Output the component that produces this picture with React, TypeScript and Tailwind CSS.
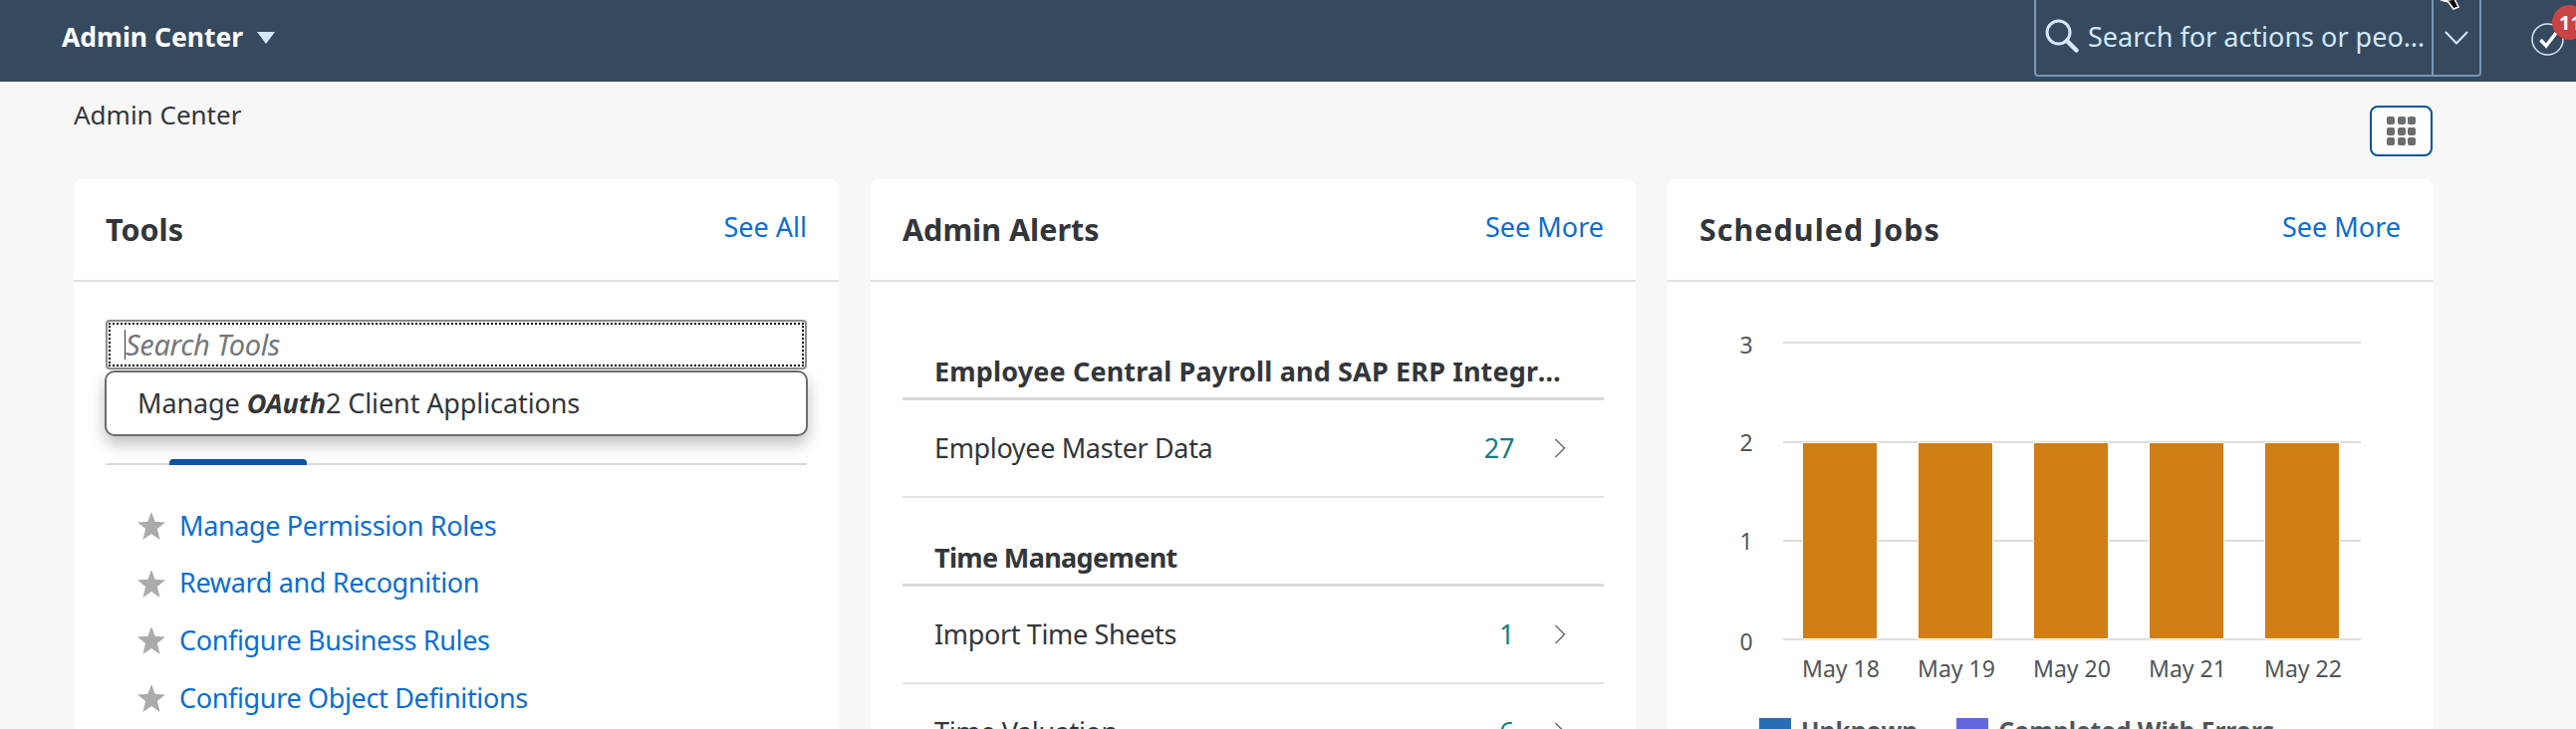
const tools = ['Manage Permission Roles', 'Reward and Recognition', 'Configure Business Rules', 'Configure Object Definitions']

const alertGroups = [
  {
    title: 'Employee Central Payroll and SAP ERP Integration',
    titleClass: 'tracking-[0.15px]',
    rows: [{ label: 'Employee Master Data', count: 27 }],
  },
  {
    title: 'Time Management',
    titleClass: 'tracking-[-0.65px]',
    rows: [
      { label: 'Import Time Sheets', count: 1 },
      { label: 'Time Valuation', count: 6 },
    ],
  },
]

const days = ['May 18', 'May 19', 'May 20', 'May 21', 'May 22']

function Star() {
  return (
    <svg width="28" height="28" viewBox="0 0 28 28" className="shrink-0">
      <polygon points="14,0 17.6,9.8 28,10.4 19.9,17 22.6,28 14,22 5.4,28 8.1,17 0,10.4 10.4,9.8" fill="#ababab" />
    </svg>
  )
}

function CardHeader({ title, link, titleClass = '' }: { title: string; link: string; titleClass?: string }) {
  return (
    <div className="flex h-[103px] justify-between border-b-2 border-[#e1e1e1] px-8 pt-[30px]">
      <h2 className={`text-[30.5px] leading-[40px] font-bold text-[#32363a] ${titleClass}`}>{title}</h2>
      <a className="text-[27px] leading-[36px] text-[#0a6ed1]">{link}</a>
    </div>
  )
}

function ToolsCard() {
  return (
    <section className="h-[552px] rounded-t-lg bg-white">
      <CardHeader title="Tools" link="See All" />
      <div className="px-8 pt-[38px]">
        <div className="h-[50px] rounded-[4px] border-2 border-[#8c8c8c] bg-white p-px">
          <div className="flex h-full items-center border-2 border-dotted border-black pl-[14px]">
            <span className="h-[30px] w-px bg-[#32363a]" />
            <span className="text-[29px] tracking-[-0.35px] text-[#74777a] italic">Search Tools</span>
          </div>
        </div>
        <div className="relative z-10 -mx-px mt-px flex h-[66px] items-center rounded-[10px] border-2 border-[#6a6d70] bg-white pl-[31px] text-[27px] tracking-[-0.1px] text-[#32363a] shadow-[0_8px_16px_rgba(0,0,0,0.25)]">
          Manage&nbsp;<b className="italic">OAuth</b>2 Client Applications
        </div>
        <div className="mt-[23px] h-[6px] border-b-[2px] border-[#d9d9d9]">
          <div className="ml-16 h-[6px] w-[138px] rounded-t-[4px] bg-[#0854a0]" />
        </div>
        <ul className="mt-[32px] pl-8">
          {tools.map((name) => (
            <li key={name} className="flex h-[57.7px] items-center gap-[14px]">
              <Star />
              <a className="text-[27px] tracking-[-0.35px] text-[#0a6ed1]">{name}</a>
            </li>
          ))}
        </ul>
      </div>
    </section>
  )
}

function Chevron() {
  return (
    <svg width="12" height="20" viewBox="0 0 12 20" fill="none" stroke="#6a6d70" strokeWidth="1.5" className="ml-[40px] shrink-0">
      <path d="M1.5 1 L10.5 10 L1.5 19" />
    </svg>
  )
}

function AlertsCard() {
  return (
    <section className="h-[552px] overflow-hidden rounded-t-lg bg-white">
      <CardHeader title="Admin Alerts" link="See More" />
      <div className="px-8 pt-[67px]">
        {alertGroups.map((group) => (
          <div key={group.title} className="mb-[37px]">
            <h3 className={`h-[52px] truncate border-b-[3px] border-[#d9d9d9] pr-[43px] pl-8 text-[27px] leading-[46px] font-bold text-[#32363a] ${group.titleClass}`}>
              {group.title}
            </h3>
            {group.rows.map((row) => (
              <div key={row.label} className="flex h-[98px] items-center border-b-2 border-[#e5e5e5] pr-[38px] pl-8 text-[27px] tracking-[-0.35px]">
                <span className="flex-1 text-[#32363a]">{row.label}</span>
                <span className="text-[#107e7d]">{row.count}</span>
                <Chevron />
              </div>
            ))}
          </div>
        ))}
      </div>
    </section>
  )
}

function JobsChart() {
  const grid = [61, 161, 260, 359]
  const labels = ['3', '2', '1', '0']
  return (
    <svg width="768" height="438" viewBox="0 0 768 438" className="block">
      {grid.map((y, i) => (
        <g key={y}>
          <line x1="116" x2="696" y1={y} y2={y} stroke="#dedede" strokeWidth="2" />
          <text x="79" y={y + (i === 1 || i === 2 ? 9 : 11)} textAnchor="middle" fontSize="23" fill="#515559">
            {labels[i]}
          </text>
        </g>
      ))}
      {days.map((day, i) => (
        <g key={day}>
          <rect x={136 + i * 116} y="162" width="74" height="196" fill="#d17e15" stroke="#ffffff" strokeWidth="2" paintOrder="stroke" />
          <text x={174 + i * 116} y="397" textAnchor="middle" fontSize="23" fill="#515559">
            {day}
          </text>
        </g>
      ))}
    </svg>
  )
}

function JobsCard() {
  return (
    <section className="h-[552px] overflow-hidden rounded-t-lg bg-white">
      <CardHeader title="Scheduled Jobs" link="See More" titleClass="tracking-[1px]" />
      <JobsChart />
      <div className="flex pl-[92px] text-[24.5px] leading-[26px] font-bold text-[#515559]">
        <span className="h-8 w-8 bg-[#286eb4]" />
        <span className="mr-[39px] ml-[10px]">Unknown</span>
        <span className="h-8 w-8 bg-[#6367de]" />
        <span className="ml-[10px]">Completed With Errors</span>
      </div>
    </section>
  )
}

export default function App() {
  return (
    <div className="h-[732px] w-[2586px] overflow-hidden bg-[#f7f7f7] font-['Noto_Sans',sans-serif]">
      <header className="relative flex h-[82px] items-start bg-[#354a5f]">
        <div className="flex h-[76px] items-center pl-[62px] text-[26.5px] font-bold text-white">
          Admin Center
          <svg width="18" height="12" viewBox="0 0 18 12" className="ml-[14px]">
            <polygon points="0,0 18,0 9,12" fill="#d1e8ff" />
          </svg>
        </div>
        <div className="ml-auto flex h-[77px] w-[449px] rounded-b-[4px] border-x-2 border-b-2 border-[#7996b4]">
          <div className="flex min-w-0 flex-1 items-center pl-[9px] text-[27px] text-[#d1e8ff]">
            <svg width="34" height="34" viewBox="0 0 34 34" fill="none" stroke="#d1e8ff" className="mt-[-4px] shrink-0">
              <circle cx="13.5" cy="13.5" r="11.5" strokeWidth="3" />
              <path d="M22 22 L31.5 31.5" strokeWidth="4.5" strokeLinecap="round" />
            </svg>
            <span className="ml-[9px] truncate">Search for actions or people</span>
          </div>
          <div className="flex w-[48px] items-center justify-center border-l-2 border-[#7996b4]">
            <svg width="24" height="14" viewBox="0 0 24 14" fill="none" stroke="#d1e8ff" strokeWidth="2">
              <path d="M1 1 L12 12.5 L23 1" />
            </svg>
          </div>
        </div>
        <div className="mr-[12px] ml-[50px] flex h-[78px] items-center">
          <svg width="33" height="33" viewBox="0 0 33 33" fill="none">
            <circle cx="16.5" cy="16.5" r="15.5" stroke="#d1e8ff" strokeWidth="1.5" />
            <path d="M9.5 17 L15 23 L25 10" stroke="#ffffff" strokeWidth="3.5" />
          </svg>
        </div>
        <span className="absolute top-[5px] left-[2562px] flex h-[35px] w-[35px] items-center rounded-full bg-[#c94444] pl-[7px] text-[20px] font-bold text-white">
          11
        </span>
        <svg width="22" height="10" viewBox="0 0 22 10" className="absolute top-0 left-[2450px]">
          <path d="M0 0 L8 0 L14 -1 L18 7 L13 9 L8 2 Z" fill="#000000" stroke="#ffffff" strokeWidth="1.5" />
        </svg>
      </header>
      <main className="pr-[144px] pl-[74px]">
        <div className="flex h-[98px] justify-between">
          <p className="pt-[16px] text-[26px] leading-[34px] text-[#32363a]">Admin Center</p>
          <button className="mt-[24px] grid h-[51px] w-[63px] grid-cols-[repeat(3,8px)] content-center justify-center gap-[2.5px] rounded-lg border-2 border-[#0854a0] bg-white">
            {Array.from({ length: 9 }, (_, i) => (
              <span key={i} className="h-2 w-2 rounded-[2px] bg-[#6a6d70]" />
            ))}
          </button>
        </div>
        <div className="grid grid-cols-3 gap-8">
          <ToolsCard />
          <AlertsCard />
          <JobsCard />
        </div>
      </main>
    </div>
  )
}
